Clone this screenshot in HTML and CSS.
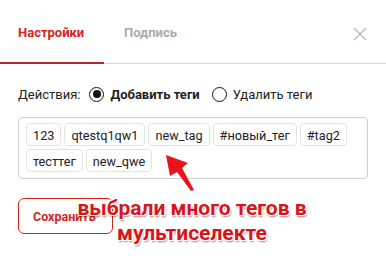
FILE: index.html
```html
<!DOCTYPE html>
<html>
<head>
  <title>Настройки</title>
  <link rel="stylesheet" href="styles.css">
</head>
<body>
  <div class="modal">
    <header class="tabs">
      <a href="#" class="tab active">Настройки</a>
      <a href="#" class="tab">Подпись</a>
      <a href="#" class="close-button" aria-label="Закрыть">
        <svg width="14" height="14" viewBox="0 0 14 14"><path d="M1 1L13 13M13 1L1 13" stroke="#b5b5b5" stroke-width="1.2" fill="none"/></svg>
      </a>
    </header>

    <div class="content">
      <div class="actions">
        <span class="label">Действия:</span>
        <label class="radio checked"><span class="dot"></span>Добавить теги</label>
        <label class="radio"><span class="dot"></span>Удалить теги</label>
      </div>

      <div class="tag-box">
        <span class="tag">123</span>
        <span class="tag">qtestq1qw1</span>
        <span class="tag">new_tag</span>
        <span class="tag">#новый_тег</span>
        <span class="tag">#tag2</span>
        <span class="tag">тесттег</span>
        <span class="tag">new_qwe</span>
      </div>

      <button class="button">Сохранить</button>
    </div>
  </div>

  <!-- annotation over the screenshot -->
  <svg class="arrow" width="40" height="45" viewBox="0 0 40 45">
    <path d="M6 5L28 13L22 18L34 40L31 41L17 22L10 26Z" fill="#e8141c"/>
  </svg>
  <div class="note">выбрали много тегов в<br>мультиселекте</div>
</body>
</html>
```

FILE: styles.css
```css
body {
  margin: 0;
  padding: 0;
  background-color: #fff;
  font-family: Roboto, "Liberation Sans", sans-serif;
  color: #222;
  position: relative;
  width: 386px;
  height: 256px;
  overflow: hidden;
}

.tabs {
  display: flex;
  align-items: center;
  height: 64px;
  border-bottom: 1px solid #d6d6d6;
  box-sizing: border-box;
  padding-top: 2px;
}

.tab {
  font-size: 13px;
  font-weight: bold;
  color: #ababab;
  text-decoration: none;
  height: 100%;
  display: flex;
  align-items: center;
  box-sizing: border-box;
  padding: 0 20px 0 20px;
}

.tab.active {
  color: #d8231b;
  width: 104px;
  padding-left: 18px;
  border-bottom: 2px solid #b7262a;
  margin-bottom: -1px;
}

.close-button {
  margin-left: auto;
  margin-right: 19px;
  margin-top: 3px;
  display: flex;
}

.content {
  padding: 20px 18px 0;
}

.actions {
  display: flex;
  align-items: center;
  font-size: 13px;
  height: 18px;
  margin-top: 1px;
}

.label {
  margin-right: 9px;
}

.radio {
  display: flex;
  align-items: center;
}

.radio .dot {
  width: 13px;
  height: 13px;
  border: 1.5px solid #111;
  border-radius: 50%;
  margin-right: 6px;
  box-sizing: content-box;
  position: relative;
}

.radio.checked {
  font-weight: bold;
  margin-right: 12px;
}

.radio.checked .dot::after {
  content: "";
  position: absolute;
  left: 2.5px;
  top: 2.5px;
  width: 8px;
  height: 8px;
  border-radius: 50%;
  background-color: #111;
}

.tag-box {
  margin-top: 14px;
  width: 350px;
  height: 62px;
  box-sizing: border-box;
  border: 1px solid #cfcfcf;
  border-radius: 4px;
  padding: 5px 6px 5px 7px;
  display: flex;
  flex-wrap: wrap;
  align-content: flex-start;
  gap: 3px;
}

.tag {
  font-size: 12.7px;
  height: 23px;
  line-height: 23px;
  padding: 0 6px;
  border: 1px solid #e3e3e3;
  border-radius: 4px;
  box-sizing: border-box;
  color: #222;
}

.button {
  margin-top: 19px;
  width: 95px;
  height: 36px;
  background: #fff;
  border: 1px solid #d8231b;
  border-radius: 6px;
  color: #d8231b;
  font-family: Roboto, "Liberation Sans", sans-serif;
  font-size: 12.5px;
  font-weight: bold;
  text-align: left;
  padding-left: 14px;
  white-space: nowrap;
  overflow: hidden;
}

.arrow {
  position: absolute;
  left: 160px;
  top: 150px;
}

.note {
  position: absolute;
  left: 52px;
  top: 196px;
  width: 280px;
  text-align: center;
  font-family: Roboto, sans-serif;
  font-weight: bold;
  font-size: 21px;
  line-height: 25px;
  color: #d8141c;
  text-shadow: 1px 1px 0 #fff, -1px -1px 0 #fff, 1px -1px 0 #fff, -1px 1px 0 #fff, 1px 2px 2px rgba(0,0,0,0.5);
}
```
